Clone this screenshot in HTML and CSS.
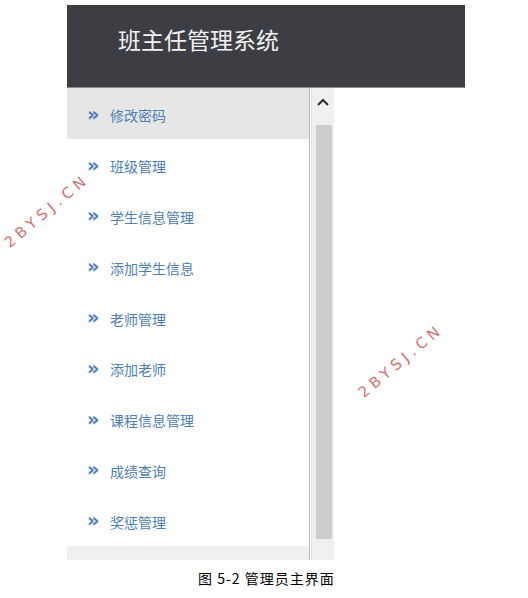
FILE: index.html
```html
<!DOCTYPE html>
<html lang="zh">
<head>
<meta charset="utf-8">
<title>班主任管理系统</title>
<link rel="stylesheet" href="styles.css">
</head>
<body>
<div class="frame">
  <div class="header"><span class="title">班主任管理系统</span></div>
  <div class="main">
    <div class="sidebar">
      <ul class="menu">
        <li class="item active"><span class="arrow">»</span><span class="label">修改密码</span></li>
        <li class="item"><span class="arrow">»</span><span class="label">班级管理</span></li>
        <li class="item"><span class="arrow">»</span><span class="label">学生信息管理</span></li>
        <li class="item"><span class="arrow">»</span><span class="label">添加学生信息</span></li>
        <li class="item"><span class="arrow">»</span><span class="label">老师管理</span></li>
        <li class="item"><span class="arrow">»</span><span class="label">添加老师</span></li>
        <li class="item"><span class="arrow">»</span><span class="label">课程信息管理</span></li>
        <li class="item"><span class="arrow">»</span><span class="label">成绩查询</span></li>
        <li class="item"><span class="arrow">»</span><span class="label">奖惩管理</span></li>
      </ul>
      <div class="foot"></div>
    </div>
    <div class="scrollbar">
      <div class="up">
        <svg width="12" height="8" viewBox="0 0 12 8"><path d="M1 7 L6 2 L11 7" fill="none" stroke="#333" stroke-width="2.2"/></svg>
      </div>
      <div class="thumb"></div>
    </div>
  </div>
</div>
<div class="caption">图 5-2 管理员主界面</div>
<div class="wm wm1">2BYSJ.CN</div>
<div class="wm wm2">2BYSJ.CN</div>
</body>
</html>
```
FILE: styles.css
```css
html, body {
  margin: 0;
  padding: 0;
  background: #ffffff;
  font-family: "Noto Sans CJK SC", "Noto Sans", sans-serif;
}
body {
  width: 528px;
  height: 598px;
  position: relative;
  overflow: hidden;
}
.frame {
  margin: 5px 0 0 67px;
  width: 398px;
}
.header {
  height: 83px;
  background: #3d3e44;
  border-bottom: 1px solid #8a8b8e;
  display: flex;
  align-items: center;
  padding-left: 51px;
  box-sizing: border-box;
}
.title {
  color: #f2f2f2;
  font-size: 23px;
  margin-top: -14px;
}
.main {
  display: flex;
  height: 472px;
}
.sidebar {
  width: 242px;
  border-right: 1px solid #b8b8b8;
  display: flex;
  flex-direction: column;
}
.menu {
  list-style: none;
  margin: 0;
  padding: 0;
}
.item {
  height: 50.8px;
  display: flex;
  align-items: center;
  padding-left: 20px;
  padding-top: 4px;
  box-sizing: border-box;
}
.item.active {
  background: #e6e6e6;
}
.arrow {
  color: #4a7fba;
  font-family: "DejaVu Sans", sans-serif;
  font-size: 19px;
  font-weight: bold;
  width: 23px;
  margin-top: -3px;
}
.label {
  color: #4d80b8;
  font-size: 14px;
}
.foot {
  flex: 1;
  background: #f0f0f0;
  margin-top: 1px;
}
.scrollbar {
  width: 22px;
  margin-left: 1px;
  background: #f0f0f0;
  display: flex;
  flex-direction: column;
  align-items: center;
  border-left: 1px solid #e2e2e2;
}
.up {
  height: 37px;
  display: flex;
  align-items: center;
  justify-content: center;
  padding-bottom: 10px;
  box-sizing: border-box;
}
.thumb {
  width: 16px;
  height: 414px;
  background: #cdcdcd;
  margin-left: 2px;
}
.caption {
  position: absolute;
  left: 198px;
  top: 568px;
  font-size: 14px;
  letter-spacing: 1px;
  color: #000;
  font-family: "Noto Sans CJK SC", sans-serif;
  font-weight: 400;
}
.wm {
  position: absolute;
  color: rgba(205, 85, 85, 0.85);
  font-family: "DejaVu Sans", sans-serif;
  font-size: 15px;
  letter-spacing: 4.6px;
  transform: rotate(-40deg);
  transform-origin: 0 100%;
  white-space: nowrap;
  line-height: 14px;
}
.wm1 {
  left: 11px;
  top: 236px;
}
.wm2 {
  left: 365px;
  top: 386px;
}
```
